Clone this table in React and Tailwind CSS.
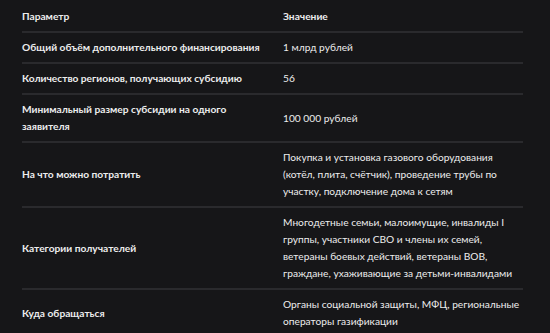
const rows = [
  ["Общий объём дополнительного финансирования", ["1 млрд рублей"]],
  ["Количество регионов, получающих субсидию", ["56"]],
  ["Минимальный размер субсидии на одного заявителя", ["100 000 рублей"]],
  [
    "На что можно потратить",
    [
      "Покупка и установка газового оборудования",
      "(котёл, плита, счётчик), проведение трубы по",
      "участку, подключение дома к сетям",
    ],
  ],
  [
    "Категории получателей",
    [
      "Многодетные семьи, малоимущие, инвалиды I",
      "группы, участники СВО и члены их семей,",
      "ветераны боевых действий, ветераны ВОВ,",
      "граждане, ухаживающие за детьми-инвалидами",
    ],
  ],
  ["Куда обращаться", ["Органы социальной защиты, МФЦ, региональные", "операторы газификации"]],
];

export default function App() {
  return (
    <div
      className="min-h-screen w-[550px] h-[333px] overflow-hidden bg-[#161618] pt-[2px] pl-[22px] text-[10.2px] leading-[17px] text-[#ededed]"
      style={{ fontFamily: 'Lato, sans-serif' }}
    >
      <div className="w-[501px]">
        <div className="grid grid-cols-[261px_240px] border-b-2 border-[#2a2a2d]">
          <div className="py-[6px] pr-4 font-bold">Параметр</div>
          <div className="py-[6px] font-bold">Значение</div>
        </div>
        {rows.map(([name, lines], i) => (
          <div
            key={i}
            className={`grid grid-cols-[261px_240px] items-center ${
              i < rows.length - 1 ? "border-b-2 border-[#2a2a2d]" : ""
            }`}
          >
            <div className="py-[6px] pr-4 font-bold">{name}</div>
            <div className="py-[6px] whitespace-nowrap">
              {lines.map((line, j) => (
                <div key={j}>{line}</div>
              ))}
            </div>
          </div>
        ))}
      </div>
    </div>
  );
}
